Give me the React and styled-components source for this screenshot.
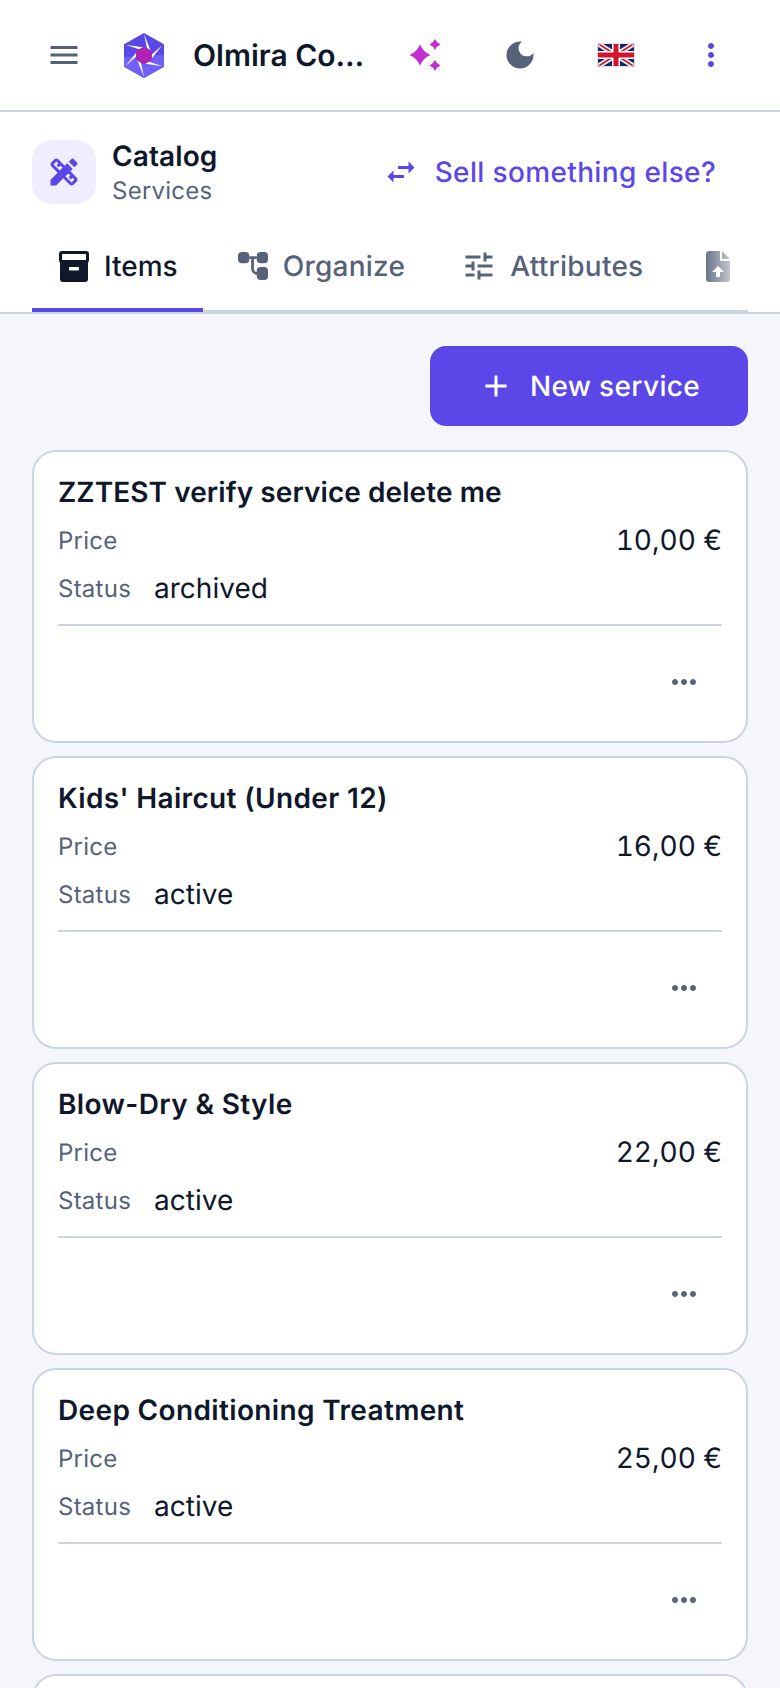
import React from "react";
import styled, { createGlobalStyle } from "styled-components";
import {
  MdMenu,
  MdDarkMode,
  MdMoreVert,
  MdMoreHoriz,
  MdDesignServices,
  MdSwapHoriz,
  MdTune,
  MdAdd,
} from "react-icons/md";

const services = [
  { name: "ZZTEST verify service delete me", price: "10,00 €", status: "archived", caps: true },
  { name: "Kids' Haircut (Under 12)", price: "16,00 €", status: "active" },
  { name: "Blow-Dry & Style", price: "22,00 €", status: "active" },
  { name: "Deep Conditioning Treatment", price: "25,00 €", status: "active" },
];

const hexPoint = (deg, r) => {
  const a = (deg * Math.PI) / 180;
  return `${20 + r * Math.cos(a)},${22.5 + r * Math.sin(a)}`;
};

const Logo = () => {
  const angles = [-90, -30, 30, 90, 150, 210];
  return (
    <svg width="40" height="45" viewBox="0 0 40 45">
      <polygon points="20,0 40,11.250 40,33.750 20,45 0,33.750 0,11.250" fill="#5b46e8" />
      <polygon points="0,33.750 20,45 40,33.750 40,22 0,24" fill="#7160f5" />
      {angles.map((a) => (
        <polygon
          key={a}
          points={`${hexPoint(a, 21.5)} ${hexPoint(a + 60, 8)} ${hexPoint(a + 22, 8)}`}
          fill="#ffffff"
        />
      ))}
      <polygon
        points={angles.map((a) => hexPoint(a, 8.5)).join(" ")}
        fill="#ae22b6"
        stroke="#ae22b6"
        strokeWidth="1"
        strokeLinejoin="round"
      />
    </svg>
  );
};

const star = (cx, cy, r) => {
  const k = 0.3 * r;
  return `M${cx} ${cy - r} Q${cx + k} ${cy - k} ${cx + r} ${cy} Q${cx + k} ${cy + k} ${cx} ${cy + r} Q${cx - k} ${cy + k} ${cx - r} ${cy} Q${cx - k} ${cy - k} ${cx} ${cy - r}Z`;
};

const Sparkles = () => (
  <svg width="32" height="32" viewBox="0 0 32 32" fill="#c02ed0">
    <path d={star(11, 16, 10.5)} />
    <path d={star(26, 5.500, 5.500)} />
    <path d={star(26, 26.500, 5.500)} />
  </svg>
);

const Flag = () => (
  <svg width="38" height="24" viewBox="0 0 38 24">
    <defs>
      <clipPath id="flagClip">
        <rect width="38" height="24" rx="4" />
      </clipPath>
    </defs>
    <g clipPath="url(#flagClip)">
      <rect width="38" height="24" fill="#10256b" />
      <path d="M0 0 L38 24 M38 0 L0 24" stroke="#ffffff" strokeWidth="5" />
      <path d="M0 0 L38 24 M38 0 L0 24" stroke="#d3122f" strokeWidth="1.800" />
      <path d="M19 0 V24 M0 12 H38" stroke="#ffffff" strokeWidth="8" />
      <path d="M19 0 V24 M0 12 H38" stroke="#d3122f" strokeWidth="5" />
    </g>
    <rect x="0.500" y="0.500" width="37" height="23" rx="3.500" fill="none" stroke="#e2e0ea" />
  </svg>
);

const ArchiveIcon = () => (
  <svg width="30" height="31" viewBox="0 0 30 31">
    <rect x="1.500" y="1.500" width="27" height="9" rx="1.500" fill="#ffffff" stroke="#0f172a" strokeWidth="3" />
    <path d="M1 10 H29 V28 a3 3 0 0 1 -3 3 H4 a3 3 0 0 1 -3 -3Z" fill="#0f172a" />
    <rect x="10" y="16" width="10" height="3.500" rx="1" fill="#ffffff" />
  </svg>
);

const OrganizeIcon = () => (
  <svg width="30" height="30" viewBox="0 0 32 30">
    <rect x="0" y="0" width="12" height="12" rx="4" fill="#56627a" />
    <rect x="20" y="0" width="12" height="12" rx="4" fill="#56627a" />
    <rect x="20" y="16" width="12" height="14" rx="4" fill="#56627a" />
    <path d="M12 6 H20 M15.500 6 V18 a5 5 0 0 0 5 5" fill="none" stroke="#56627a" strokeWidth="3" />
  </svg>
);

const FileUploadIcon = () => (
  <svg width="27" height="31" viewBox="-3 0 27 31">
    <path d="M3 0 H14 V10 H24 V28 a3 3 0 0 1 -3 3 H3 a3 3 0 0 1 -3 -3 V3 a3 3 0 0 1 3 -3Z" fill="#56627a" />
    <path d="M16 0 L24 8 H16Z" fill="#56627a" />
    <path d="M12 15 L18 21 H14 V26 H10 V21 H6Z" fill="#ffffff" />
  </svg>
);

const App = () => {
  return (
    <Page>
      <GlobalStyle />
      <TopBar>
        <MenuButton>
          <MdMenu />
        </MenuButton>
        <LogoBox>
          <Logo />
        </LogoBox>
        <Brand>Olmira Consulting</Brand>
        <TopActions>
          <TopAction>
            <Sparkles />
          </TopAction>
          <TopAction $color="#56627a" $size="36px">
            <MdDarkMode />
          </TopAction>
          <TopAction>
            <Flag />
          </TopAction>
          <TopAction $color="#5b46e8" $size="36px">
            <MdMoreVert />
          </TopAction>
        </TopActions>
      </TopBar>

      <SectionPanel>
        <SectionHead>
          <SectionIcon>
            <MdDesignServices />
          </SectionIcon>
          <SectionText>
            <SectionTitle>Catalog</SectionTitle>
            <SectionSub>Services</SectionSub>
          </SectionText>
          <SwitchLink>
            <MdSwapHoriz />
            Sell something else?
          </SwitchLink>
        </SectionHead>
        <Tabs>
          <Tab $active>
            <ArchiveIcon />
            Items
          </Tab>
          <Tab>
            <OrganizeIcon />
            Organize
          </Tab>
          <Tab>
            <TabIconBox>
              <MdTune />
            </TabIconBox>
            Attributes
          </Tab>
          <Tab>
            <FileUploadIcon />
          </Tab>
        </Tabs>
      </SectionPanel>

      <Content>
        <Toolbar>
          <NewButton>
            <MdAdd />
            New service
          </NewButton>
        </Toolbar>
        <CardList>
          {services.map((s) => (
            <Card key={s.name}>
              <CardTitle $caps={s.caps}>{s.name}</CardTitle>
              <PriceRow>
                <Label>Price</Label>
                <PriceValue>{s.price}</PriceValue>
              </PriceRow>
              <StatusRow>
                <Label>Status</Label>
                <Value>{s.status}</Value>
              </StatusRow>
              <CardFooter>
                <MoreButton>
                  <MdMoreHoriz />
                </MoreButton>
              </CardFooter>
            </Card>
          ))}
          <Card />
        </CardList>
      </Content>
    </Page>
  );
};

const GlobalStyle = createGlobalStyle`
  html, body {
    margin: 0;
    padding: 0;
    background: #f4f6fb;
  }
  body {
    font-family: Inter, "Liberation Sans", sans-serif;
    color: #0f172a;
    text-rendering: geometricPrecision;
  }
  * {
    box-sizing: border-box;
  }
`;

const Page = styled.div`
  height: 1688px;
  overflow: hidden;
  background-color: #f4f6fb;
`;

const TopBar = styled.header`
  display: flex;
  align-items: center;
  height: 112px;
  padding: 0 21px 0 46px;
  background-color: #ffffff;
  border-bottom: 2px solid #cbd5e1;
`;

const MenuButton = styled.div`
  display: flex;
  width: 36px;
  margin-right: 42px;
  color: #56627a;
  svg {
    width: 36px;
    height: 36px;
  }
`;

const LogoBox = styled.div`
  display: flex;
  margin-right: 29px;
`;

const Brand = styled.div`
  width: 173px;
  padding-top: 2px;
  font-size: 30px;
  font-weight: 600;
  white-space: nowrap;
  overflow: hidden;
  text-overflow: ellipsis;
`;

const TopActions = styled.div`
  display: grid;
  grid-template-columns: repeat(4, 95.5px);
  align-items: center;
  margin-left: auto;
`;

const TopAction = styled.div`
  display: flex;
  align-items: center;
  justify-content: center;
  color: ${(p) => p.$color || "inherit"};
  & > svg {
    display: block;
    ${(p) => (p.$size ? `width: ${p.$size}; height: ${p.$size};` : "")}
  }
`;

const SectionPanel = styled.section`
  padding: 24px 32px 0;
  background-color: #ffffff;
  border-bottom: 2px solid #cbd5e1;
`;

const SectionHead = styled.div`
  display: flex;
  align-items: center;
  gap: 16px;
`;

const SectionIcon = styled.div`
  display: flex;
  align-items: center;
  justify-content: center;
  width: 64px;
  height: 64px;
  border-radius: 20px;
  background-color: #f0edfe;
  color: #5b46e8;
  svg {
    width: 36px;
    height: 36px;
  }
`;

const SectionText = styled.div`
  display: flex;
  flex-direction: column;
  padding-top: 2px;
`;

const SectionTitle = styled.div`
  font-size: 28px;
  line-height: 36px;
  font-weight: 600;
  letter-spacing: 0.1px;
`;

const SectionSub = styled.div`
  font-size: 24px;
  line-height: 34px;
  letter-spacing: 0.25px;
  color: #56627a;
`;

const SwitchLink = styled.div`
  display: flex;
  align-items: center;
  gap: 16px;
  margin-left: auto;
  padding-right: 32px;
  font-size: 28px;
  font-weight: 500;
  letter-spacing: 0.35px;
  color: #5b46e8;
  svg {
    width: 36px;
    height: 36px;
  }
`;

const Tabs = styled.nav`
  position: relative;
  display: flex;
  gap: 8px;
  height: 90px;
  margin-top: 16px;
  margin-bottom: -2px;
  overflow: hidden;
  &::after {
    content: "";
    position: absolute;
    left: 0;
    right: 0;
    bottom: 0;
    height: 4px;
    background-color: #cbd5e1;
  }
  &::before {
    content: "";
    position: absolute;
    top: 0;
    right: 0;
    bottom: 4px;
    width: 48px;
    z-index: 2;
    background: linear-gradient(90deg, rgba(255, 255, 255, 0), #ffffff);
  }
`;

const Tab = styled.div`
  position: relative;
  z-index: 1;
  display: flex;
  flex-shrink: 0;
  align-items: center;
  gap: 15px;
  height: 88px;
  padding: 0 25px 0 27px;
  font-size: 28px;
  font-weight: 500;
  letter-spacing: ${(p) => (p.$active ? "0" : "0.25px")};
  color: ${(p) => (p.$active ? "#0f172a" : "#56627a")};
  border-bottom: 4px solid ${(p) => (p.$active ? "#5b46e8" : "transparent")};
`;

const TabIconBox = styled.span`
  display: flex;
  margin: 0 -2px 0 -4px;
  svg {
    width: 36px;
    height: 36px;
  }
`;

const Content = styled.main`
  padding: 32px 32px 0;
`;

const Toolbar = styled.div`
  display: flex;
  justify-content: flex-end;
  margin-bottom: 24px;
`;

const NewButton = styled.div`
  display: flex;
  align-items: center;
  justify-content: center;
  gap: 16px;
  width: 318px;
  height: 80px;
  border-radius: 16px;
  background-color: #5b46e8;
  color: #ffffff;
  font-size: 28px;
  font-weight: 500;
  letter-spacing: 0.35px;
  svg {
    width: 36px;
    height: 36px;
  }
`;

const CardList = styled.div`
  display: flex;
  flex-direction: column;
  gap: 13px;
`;

const Card = styled.article`
  display: flex;
  flex-direction: column;
  height: 293px;
  padding: 22px 24px 0;
  background-color: #ffffff;
  border: 2px solid #cbd5e1;
  border-radius: 24px;
`;

const CardTitle = styled.div`
  font-size: 28px;
  line-height: 36px;
  font-weight: 600;
  letter-spacing: ${(p) => (p.$caps ? "0.07px" : "0.35px")};
`;

const PriceRow = styled.div`
  display: flex;
  align-items: center;
  justify-content: space-between;
  margin-top: 10px;
  height: 40px;
`;

const StatusRow = styled.div`
  display: flex;
  align-items: center;
  gap: 23px;
  height: 40px;
  margin-top: 8px;
`;

const Label = styled.span`
  font-size: 24px;
  letter-spacing: 0.25px;
  color: #56627a;
`;

const Value = styled.span`
  font-size: 28px;
  color: #0f172a;
`;

const PriceValue = styled(Value)`
  font-variant-numeric: tabular-nums;
`;

const CardFooter = styled.div`
  display: flex;
  justify-content: flex-end;
  margin-top: 16px;
  padding-top: 16px;
  border-top: 2px solid #cbd5e1;
`;

const MoreButton = styled.div`
  display: flex;
  align-items: center;
  justify-content: center;
  width: 76px;
  height: 80px;
  color: #56627a;
  svg {
    width: 36px;
    height: 36px;
  }
`;

export default App;
